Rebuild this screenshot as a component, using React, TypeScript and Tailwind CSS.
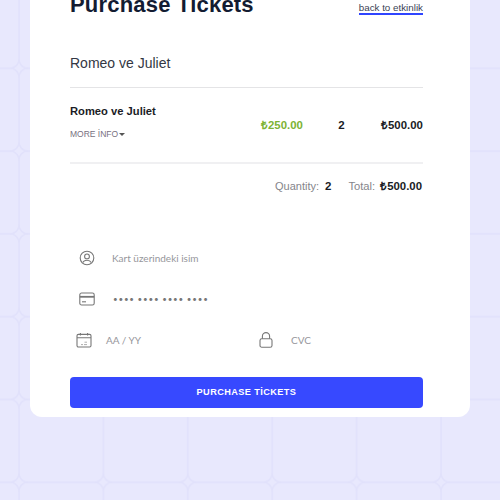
import React from "react";

const sans = "font-['Liberation_Sans',Arial,sans-serif]";

function Background() {
  return (
    <svg className="absolute inset-0 w-full h-full" aria-hidden="true">
      <defs>
        <pattern id="tiles" x="19" y="-14.5" width="84.4" height="82.8" patternUnits="userSpaceOnUse">
          <path d="M0 9V73.8A9 9 0 0 0 9 82.8H75.4A9 9 0 0 0 84.4 73.8V9A9 9 0 0 0 75.4 0H9A9 9 0 0 0 0 9Z" fill="none" stroke="#e1e1fb" strokeWidth="1.5" />
        </pattern>
      </defs>
      <rect width="100%" height="100%" fill="#e8e8fd" />
      <rect width="100%" height="100%" fill="url(#tiles)" />
    </svg>
  );
}

function UserIcon() {
  return (
    <svg width="16" height="16" viewBox="0 0 16 16" fill="none" stroke="#777" strokeWidth="1.1">
      <circle cx="8" cy="8" r="6.8" />
      <circle cx="8" cy="6.4" r="2.4" />
      <path d="M3.8 12.6C4.6 10.9 6 10.3 8 10.3s3.4.6 4.2 2.3" />
    </svg>
  );
}

function CardIcon() {
  return (
    <svg width="16" height="14" viewBox="0 0 16 14" fill="none" stroke="#777" strokeWidth="1.1">
      <rect x="0.8" y="1" width="14.4" height="12" rx="1.8" />
      <path d="M0.8 4.8H15.2" strokeWidth="1.8" />
      <path d="M3 9.8H7" />
    </svg>
  );
}

function CalendarIcon() {
  return (
    <svg width="16" height="16" viewBox="0 0 16 16" fill="none" stroke="#777" strokeWidth="1.1">
      <rect x="1" y="2.4" width="14" height="12.6" rx="1.4" />
      <path d="M1 5.8H15M4.4 1V3.6M11.6 1V3.6" />
      <path d="M5 12.6H7M8 12.6H11M8.5 10.2H11" strokeWidth="0.9" stroke="#a5a5a5" />
    </svg>
  );
}

function LockIcon() {
  return (
    <svg width="14" height="16" viewBox="0 0 14 16" fill="none" stroke="#777" strokeWidth="1.1">
      <rect x="1" y="6.8" width="12" height="8.4" rx="1.8" />
      <path d="M3.4 6.8V4.2a3.6 3.6 0 0 1 7.2 0V6.8" />
    </svg>
  );
}

export default function App() {
  return (
    <div className={`relative h-[500px] w-[500px] overflow-hidden ${sans}`}>
      <Background />
      <div className="relative mx-[30px] -mt-[12px] w-[440px] rounded-b-[12px] bg-white pl-10 pr-[47px] pb-[9px]">
        <div className="flex h-[36px] items-center justify-between">
          <h1 className="-mt-[2px] text-[22px] font-bold leading-[30px] tracking-[0.2px] text-[#131c32]">Purchase Tickets</h1>
          <a className="mt-[5px] border-b-2 border-[#2f45ff] text-[9.8px] leading-[10px] text-[#3a3f55]">back to etkinlik</a>
        </div>

        <div className="mt-[29px] border-b border-[#e4e4e6] pb-[14px] text-[14px] leading-[20px] text-[#333743]">Romeo ve Juliet</div>

        <div className="flex h-[76px] items-center border-b-2 border-[#f0f0f2]">
          <div className="-mt-[8px] flex-1">
            <div className="text-[11.2px] font-bold leading-[14px] text-[#1a1c25]">Romeo ve Juliet</div>
            <div className="mt-[11px] flex items-center text-[8.5px] leading-[10px] text-[#777080]">
              MORE İNFO
              <span className="ml-[1px] mt-[1px] h-0 w-0 border-x-[3px] border-t-[3px] border-x-transparent border-t-[#555]" />
            </div>
          </div>
          <div className="mr-[1px] w-[41px] pt-[1px] text-[11.4px] font-bold whitespace-nowrap text-[#7db334]">₺250.00</div>
          <div className="w-[78px] pt-[2px] pr-[1px] text-center text-[11.5px] font-bold text-[#1a1c25]">2</div>
          <div className="w-[41px] mr-[1px] pt-[1px] text-right text-[11.4px] font-bold whitespace-nowrap text-[#1a1c25]">₺500.00</div>
        </div>

        <div className="mt-[14px] flex items-center justify-end pr-[1px] text-[11px] leading-[16px]">
          <span className="text-[#85858b]">Quantity:</span>
          <span className="ml-[6px] text-[11.5px] font-bold text-[#1a1c25]">2</span>
          <span className="ml-[17px] text-[11.2px] text-[#85858b]">Total:</span>
          <span className="ml-[5px] text-[11.4px] font-bold text-[#1a1c25]">₺500.00</span>
        </div>

        <div className="mt-[56px] font-['Lato',sans-serif] text-[10px] text-[#96969b]">
          <div className="flex h-[16px] items-center pl-[9px]">
            <UserIcon />
            <span className="ml-[17px]">Kart üzerindeki isim</span>
          </div>
          <div className="mt-[25px] flex h-[16px] items-center pl-[9px]">
            <CardIcon />
            <span className="ml-[18px] text-[8px] tracking-[0.8px] text-[#777]">•••• •••• •••• ••••</span>
          </div>
          <div className="mt-[25px] flex h-[16px] items-center pl-[6px]">
            <div className="flex w-[183px] items-center">
              <CalendarIcon />
              <span className="ml-[14px]">AA / YY</span>
            </div>
            <LockIcon />
            <span className="ml-[18px]">CVC</span>
          </div>
        </div>

        <button className="mt-[29px] flex h-[31px] w-full items-center justify-center rounded-[4px] bg-[#3749ff] text-[9.2px] font-bold tracking-[0.4px] text-white">
          PURCHASE TİCKETS
        </button>
      </div>
    </div>
  );
}
